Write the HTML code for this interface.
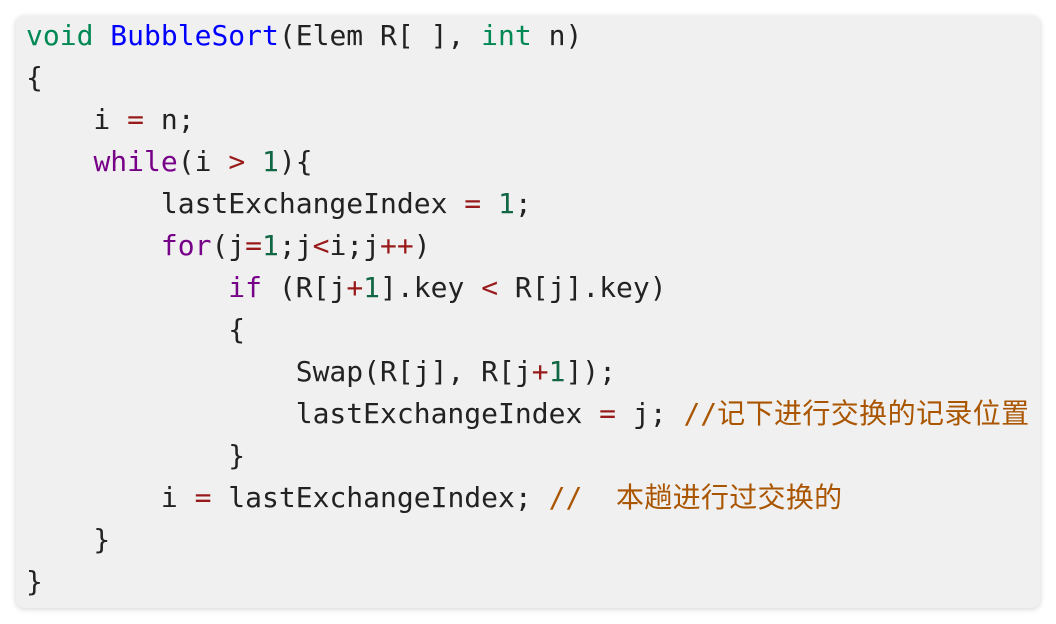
<!DOCTYPE html>
<html><head><style>
html,body{margin:0;padding:0;background:#fff;width:1056px;height:624px;overflow:hidden}
.box{position:absolute;left:16px;top:16px;width:1024px;height:592px;background:#f0f0f0;border-radius:8px;box-shadow:0 1px 6px rgba(0,0,0,0.18)}
pre{position:absolute;left:10px;top:-1px;margin:0;font-family:"DejaVu Sans Mono","Noto Sans CJK SC",monospace;font-size:28px;line-height:42px;color:#222}
.t{color:#085}.d{color:#00f}.k{color:#708}.n{color:#164}.o{color:#981a1a}.c{color:#a50}
.z1{letter-spacing:0.4px}.z2{letter-spacing:0.3px}
</style></head><body>
<div class="box"><pre><span class="t">void</span> <span class="d">BubbleSort</span>(Elem R[ ], <span class="t">int</span> n)
{
    i <span class="o">=</span> n;
    <span class="k">while</span>(i <span class="o">&gt;</span> <span class="n">1</span>){
        lastExchangeIndex <span class="o">=</span> <span class="n">1</span>;
        <span class="k">for</span>(j<span class="o">=</span><span class="n">1</span>;j<span class="o">&lt;</span>i;j<span class="o">++</span>)
            <span class="k">if</span> (R[j<span class="o">+</span><span class="n">1</span>].key <span class="o">&lt;</span> R[j].key)
            {
                Swap(R[j], R[j<span class="o">+</span><span class="n">1</span>]);
                lastExchangeIndex <span class="o">=</span> j; <span class="c">//<span class="z1">记下进行交换的记录位置</span></span>
            }
        i <span class="o">=</span> lastExchangeIndex; <span class="c">//  <span class="z2">本趟进行过交换的</span></span>
    }
}</pre></div>
</body></html>
